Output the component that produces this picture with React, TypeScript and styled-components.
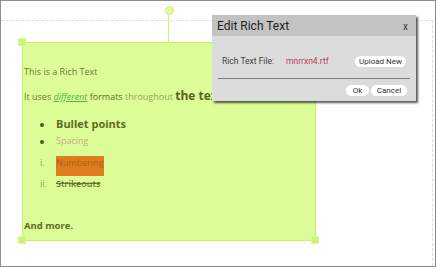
import React from 'react';
import styled, { createGlobalStyle } from 'styled-components';

const GlobalStyle = createGlobalStyle`
  html, body {
    margin: 0;
    padding: 0;
    background: #ffffff;
  }
  * {
    box-sizing: border-box;
  }
`;

const Frame = styled.div`
  position: relative;
  width: 436px;
  height: 267px;
  border: 1px solid #8c8c8c;
  background: #ffffff;
  padding-top: 19px;
  overflow: hidden;
`;

const PageArea = styled.div`
  width: 432px;
  height: 100%;
  border-top: 1px dashed #dcdcdc;
  border-right: 1px dashed #dcdcdc;
`;

// shape on the free canvas
const Shape = styled.div`
  position: absolute;
  left: 21px;
  top: 41px;
  width: 294px;
  height: 199px;
  background: #dcfc98;
  border: 1px solid #c5f264;
  font-family: 'Open Sans', 'DejaVu Sans', sans-serif;
  color: #6c7c2c;
  overflow: hidden;
`;

const ShapeBody = styled.div`
  padding: 22px 0 0 1px;
  white-space: nowrap;
`;

const Para = styled.p<{ $gap?: number }>`
  margin: ${({ $gap }) => $gap ?? 0}px 0 0 0;
  font-size: 9px;
  line-height: 14px;
`;

const ParaLarge = styled(Para)`
  line-height: 16px;
`;

const Link = styled.span`
  color: #55b343;
  font-style: italic;
  text-decoration: underline;
`;

const Formats = styled.span`
  color: #5c6d22;
`;

const Light = styled.span`
  color: #93a75a;
`;

const Big = styled.span`
  font-size: 12px;
  font-weight: 700;
  color: #56661c;
`;

const List = styled.ul<{ $gap: number }>`
  list-style: none;
  margin: ${({ $gap }) => $gap}px 0 0 0;
  padding: 0;
`;

const Item = styled.li<{ $gap?: number }>`
  display: flex;
  align-items: flex-start;
  margin-top: ${({ $gap }) => $gap ?? 0}px;
  font-size: 9px;
  line-height: 14px;
`;

const Marker = styled.span`
  width: 32px;
  padding-left: 16px;
  flex-shrink: 0;
  color: #94a65a;
`;

const Dot = styled.span<{ $top: number }>`
  display: inline-block;
  width: 4px;
  height: 4px;
  border-radius: 50%;
  background: #4a5a18;
  margin-top: ${({ $top }) => $top}px;
`;

const BulletBold = styled.span`
  font-size: 11px;
  line-height: 16px;
  font-weight: 700;
  color: #5c6c22;
`;

const Spacing = styled.span`
  color: #bcb67a;
`;

const Highlight = styled.span`
  display: inline-block;
  height: 20px;
  background: #e07c1e;
  color: #a8661a;
`;

const Strike = styled.span`
  font-weight: 600;
  text-decoration: line-through;
  color: #66762a;
`;

const Closing = styled(Para)`
  font-size: 9.5px;
  font-weight: 700;
  color: #5c6c22;
`;

const Handle = styled.div<{ $x: number; $y: number }>`
  position: absolute;
  left: ${({ $x }) => $x - 4}px;
  top: ${({ $y }) => $y - 4}px;
  width: 8px;
  height: 8px;
  background: #c9f57a;
  border: 1px solid #d8fa98;
`;

const RotateStem = styled.div`
  position: absolute;
  left: 167px;
  top: 13px;
  width: 1px;
  height: 28px;
  background: #cff46e;
`;

const RotateKnob = styled.div`
  position: absolute;
  left: 164px;
  top: 5px;
  width: 9px;
  height: 9px;
  border-radius: 50%;
  background: #e2fca6;
  border: 1.5px solid #cdf36c;
`;

// dialog lies over the canvas
const Dialog = styled.div`
  position: absolute;
  left: 211px;
  top: 14px;
  width: 204px;
  height: 86px;
  background: #dcdcdc;
  box-shadow: 2px 2px 2px rgba(0, 0, 0, 0.65);
  font-family: Roboto, 'Liberation Sans', sans-serif;
  display: flex;
  flex-direction: column;
`;

const TitleBar = styled.div`
  height: 21px;
  background: #c3c3c3;
  display: flex;
  align-items: center;
  justify-content: space-between;
  padding: 0 8px 0 5px;
`;

const Title = styled.span`
  font-size: 12px;
  color: #1e1e1e;
`;

const Close = styled.span`
  font-size: 10px;
  color: #333;
  margin-top: 2px;
`;

const FileRow = styled.div`
  display: flex;
  align-items: center;
  height: 12px;
  margin-top: 19px;
  padding: 0 10px 0 10px;
  font-size: 8.5px;
`;

const Label = styled.span`
  color: #3e3e3e;
  width: 64px;
`;

const FileName = styled.span`
  color: #c23a5c;
  flex: 1;
`;

const PillButton = styled.button<{ $w: number }>`
  width: ${({ $w }) => $w}px;
  height: 11px;
  padding: 0;
  border: none;
  border-radius: 6px;
  background: #ffffff;
  font-family: Roboto, 'Liberation Sans', sans-serif;
  font-size: 8px;
  line-height: 11px;
  color: #333;
`;

const Divider = styled.div`
  height: 1px;
  margin: 11px 6px 0 6px;
  background: #7a7a7a;
`;

const Actions = styled.div`
  display: flex;
  justify-content: flex-end;
  gap: 2px;
  margin-top: 6px;
  padding-right: 9px;
`;

export default function App() {
  return (
    <>
      <GlobalStyle />
      <Frame>
        <PageArea />
        <RotateStem />
        <RotateKnob />
        <Shape>
          <ShapeBody>
            <Para>This is a Rich Text</Para>
            <ParaLarge $gap={9}>
              It uses <Link>different</Link> <Formats>formats</Formats> <Light>throughout</Light>{' '}
              <Big>the text.</Big>
            </ParaLarge>
            <List $gap={11}>
              <Item>
                <Marker>
                  <Dot $top={7} />
                </Marker>
                <BulletBold>Bullet points</BulletBold>
              </Item>
              <Item $gap={2}>
                <Marker>
                  <Dot $top={6} />
                </Marker>
                <Spacing>Spacing</Spacing>
              </Item>
            </List>
            <List $gap={8}>
              <Item>
                <Marker>i.</Marker>
                <Highlight>Numbering</Highlight>
              </Item>
              <Item $gap={1}>
                <Marker>ii.</Marker>
                <Strike>Strikeouts</Strike>
              </Item>
            </List>
            <Closing $gap={28}>And more.</Closing>
          </ShapeBody>
        </Shape>
        <Handle $x={21} $y={41} />
        <Handle $x={21} $y={239} />
        <Handle $x={314} $y={239} />
        <Handle $x={314} $y={41} />
        <Dialog>
          <TitleBar>
            <Title>Edit Rich Text</Title>
            <Close>x</Close>
          </TitleBar>
          <FileRow>
            <Label>Rich Text File:</Label>
            <FileName>mnrrxn4.rtf</FileName>
            <PillButton $w={51}>Upload New</PillButton>
          </FileRow>
          <Divider />
          <Actions>
            <PillButton $w={23}>Ok</PillButton>
            <PillButton $w={36}>Cancel</PillButton>
          </Actions>
        </Dialog>
      </Frame>
    </>
  );
}
